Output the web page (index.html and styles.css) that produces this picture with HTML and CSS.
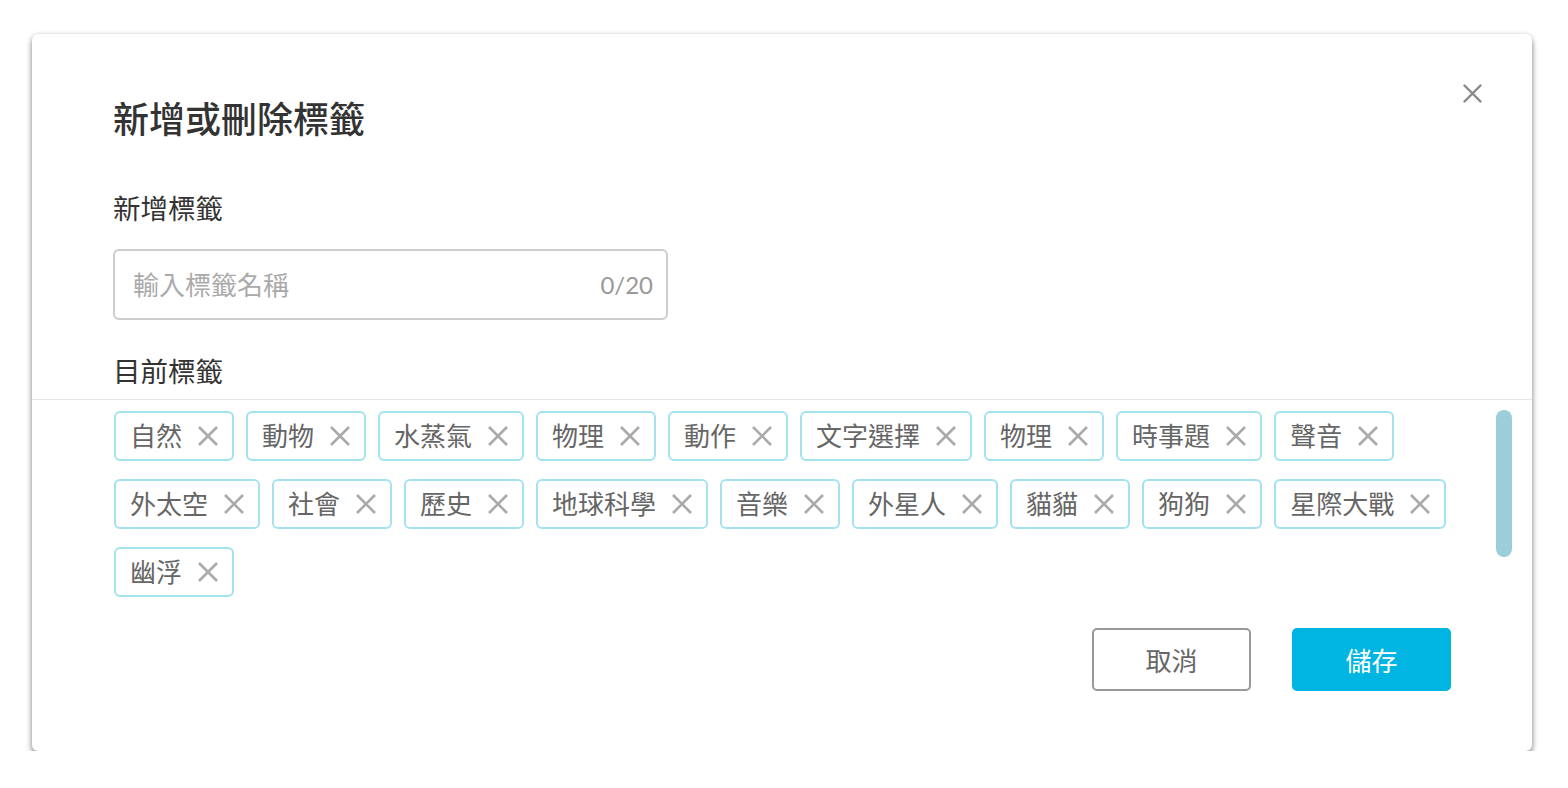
FILE: index.html
```html
<!DOCTYPE html>
<html lang="zh-Hant">
<head>
    <meta charset="UTF-8">
    <meta name="viewport" content="width=device-width, initial-scale=1.0">
    <title>標籤管理</title>
    <link rel="stylesheet" href="styles.css">
</head>
<body>
    <div class="overlay">
        <div class="dialog">
            <button class="close-btn" type="button" aria-label="關閉">
                <svg width="19" height="19" viewBox="0 0 19 19"><path d="M1.5 1.5L17.5 17.5M17.5 1.5L1.5 17.5" stroke="#888" stroke-width="2.4" stroke-linecap="round"/></svg>
            </button>

            <div class="dialog-head">
                <h1>新增或刪除標籤</h1>

                <label class="section-label" for="tag-name">新增標籤</label>
                <div class="input-box">
                    <input type="text" id="tag-name" placeholder="輸入標籤名稱" maxlength="20">
                    <span class="counter">0/20</span>
                </div>

                <div class="section-label">目前標籤</div>
            </div>

            <div class="tags-area">
                <div class="tag-list" id="tag-list"></div>
                <div class="scroll-track">
                    <div class="scroll-thumb"></div>
                </div>
            </div>

            <div class="dialog-foot">
                <button type="button" class="btn btn-cancel">取消</button>
                <button type="button" class="btn btn-save">儲存</button>
            </div>
        </div>
    </div>

    <script>
        const tags = ["自然", "動物", "水蒸氣", "物理", "動作", "文字選擇", "物理", "時事題", "聲音",
            "外太空", "社會", "歷史", "地球科學", "音樂", "外星人", "貓貓", "狗狗", "星際大戰", "幽浮"];

        const list = document.getElementById("tag-list");
        const icon = '<svg width="22" height="22" viewBox="0 0 22 22"><path d="M2 2L20 20M20 2L2 20" stroke="#aaa" stroke-width="2.6"/></svg>';

        tags.forEach(function(name) {
            const tag = document.createElement("div");
            tag.className = "tag";
            tag.innerHTML = '<span class="tag-name">' + name + '</span><span class="tag-remove">' + icon + '</span>';
            tag.querySelector(".tag-remove").addEventListener("click", function() {
                tag.remove();
            });
            list.appendChild(tag);
        });

        const input = document.getElementById("tag-name");
        input.addEventListener("input", function() {
            document.querySelector(".counter").textContent = input.value.length + "/20";
        });
    </script>
</body>
</html>
```

FILE: styles.css
```css
body {
    margin: 0;
    padding: 0;
    background-color: #fff;
    font-family: Lato, "Noto Sans CJK TC", sans-serif;
    color: #333;
}
.overlay {
    padding: 34px 36px 0 32px;
}
.dialog {
    position: relative;
    width: 1500px;
    background-color: #fff;
    border-radius: 6px;
    box-shadow: 0 4px 6px rgba(0, 0, 0, 0.45), 0 0 4px rgba(0, 0, 0, 0.12);
}
.close-btn {
    position: absolute;
    top: 50px;
    right: 50px;
    width: 19px;
    height: 19px;
    padding: 0;
    border: none;
    background: none;
    cursor: pointer;
}
.close-btn svg {
    display: block;
}
.dialog-head {
    padding: 61px 81px 7px 81px;
}
h1 {
    margin: 0;
    font-size: 36px;
    line-height: 48px;
    font-weight: 500;
    color: #333;
}
.section-label {
    display: block;
    margin-top: 46px;
    font-size: 27.5px;
    line-height: 40px;
    color: #333;
}
.input-box {
    display: flex;
    align-items: center;
    box-sizing: border-box;
    width: 555px;
    height: 71px;
    margin-top: 20px;
    margin-bottom: 32px;
    padding: 0 13px 0 18px;
    border: 2px solid #ccc;
    border-radius: 6px;
}
.input-box + .section-label {
    margin-top: 0;
}
.input-box input {
    flex: 1;
    min-width: 0;
    border: none;
    outline: none;
    padding: 0;
    font-family: inherit;
    font-size: 26px;
    color: #333;
}
.input-box input::placeholder {
    color: #aaa;
}
.counter {
    font-size: 24px;
    color: #999;
}
.tags-area {
    display: flex;
    gap: 40px;
    height: 199px;
    padding: 10px 20px 0 82px;
    border-top: 1px solid #e6e6e6;
}
.tag-list {
    flex: 1;
    display: flex;
    flex-wrap: wrap;
    align-content: flex-start;
    gap: 18px 12px;
    padding-top: 1px;
}
.tag {
    display: flex;
    align-items: center;
    gap: 15px;
    box-sizing: border-box;
    height: 50px;
    padding: 0 13px 0 14px;
    border: 2px solid #a3e3f0;
    border-radius: 6px;
    font-size: 26px;
    color: #666;
}
.tag-name {
    line-height: 1;
}
.tag-remove {
    display: flex;
    cursor: pointer;
}
.scroll-track {
    width: 16px;
}
.scroll-thumb {
    height: 147px;
    border-radius: 8px;
    background-color: #9bced8;
}
.dialog-foot {
    display: flex;
    justify-content: flex-end;
    gap: 41px;
    padding: 19px 81px 60px;
}
.btn {
    width: 159px;
    height: 63px;
    border-radius: 5px;
    font-family: inherit;
    font-size: 26px;
    cursor: pointer;
}
.btn-cancel {
    background-color: #fff;
    border: 2px solid #999;
    color: #666;
}
.btn-save {
    background-color: #00b5e2;
    border: none;
    color: #fff;
}
```
